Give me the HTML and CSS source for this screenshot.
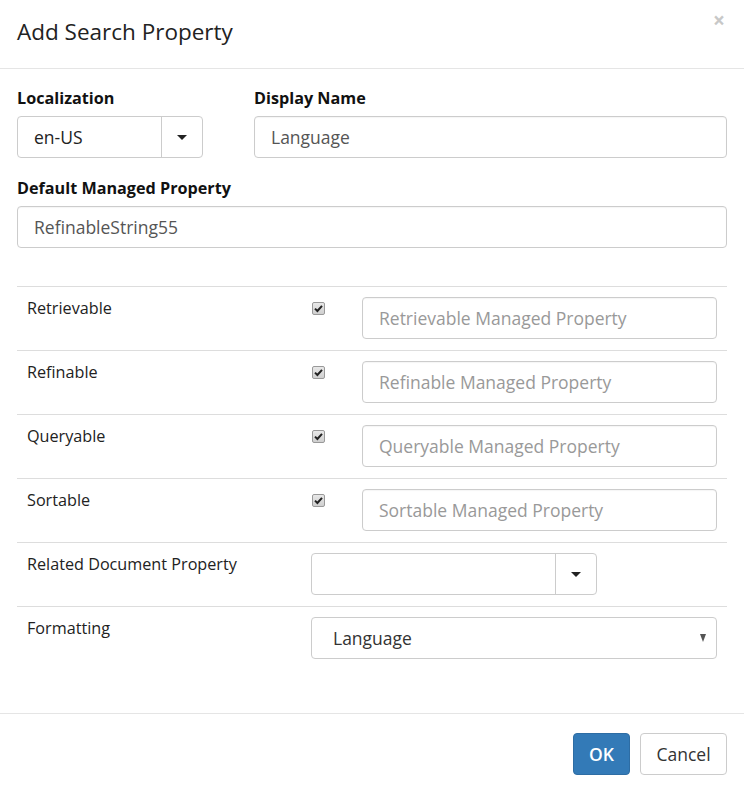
FILE: index.html
```html
<!DOCTYPE html>
<html>
<head>
<meta charset="utf-8">
<link rel="stylesheet" href="styles.css">
</head>
<body>
<div class="modal">
  <div class="modal-header">
    <h4 class="modal-title">Add Search Property</h4>
    <span class="close">×</span>
  </div>
  <div class="modal-body">
    <div class="top-row">
      <div class="field">
        <label class="lbl">Localization</label>
        <div class="combo combo-loc">
          <span class="combo-text">en-US</span>
          <span class="combo-btn"><span class="caret"></span></span>
        </div>
      </div>
      <div class="field">
        <label class="lbl">Display Name</label>
        <div class="input">Language</div>
      </div>
    </div>
    <div class="field">
      <label class="lbl">Default Managed Property</label>
      <div class="input">RefinableString55</div>
    </div>

    <div class="props">
      <div class="prow">
        <div class="pcell plabel">Retrievable</div>
        <div class="pcell pcheck"><span class="cb"><svg viewBox="0 0 13 13" width="13" height="13"><path d="M3 6.6 L5.4 9 L10 3.8" fill="none" stroke="#222" stroke-width="2"/></svg></span></div>
        <div class="pcell pinput"><div class="input ph">Retrievable Managed Property</div></div>
      </div>
      <div class="prow">
        <div class="pcell plabel">Refinable</div>
        <div class="pcell pcheck"><span class="cb"><svg viewBox="0 0 13 13" width="13" height="13"><path d="M3 6.6 L5.4 9 L10 3.8" fill="none" stroke="#222" stroke-width="2"/></svg></span></div>
        <div class="pcell pinput"><div class="input ph">Refinable Managed Property</div></div>
      </div>
      <div class="prow">
        <div class="pcell plabel">Queryable</div>
        <div class="pcell pcheck"><span class="cb"><svg viewBox="0 0 13 13" width="13" height="13"><path d="M3 6.6 L5.4 9 L10 3.8" fill="none" stroke="#222" stroke-width="2"/></svg></span></div>
        <div class="pcell pinput"><div class="input ph">Queryable Managed Property</div></div>
      </div>
      <div class="prow">
        <div class="pcell plabel">Sortable</div>
        <div class="pcell pcheck"><span class="cb"><svg viewBox="0 0 13 13" width="13" height="13"><path d="M3 6.6 L5.4 9 L10 3.8" fill="none" stroke="#222" stroke-width="2"/></svg></span></div>
        <div class="pcell pinput"><div class="input ph">Sortable Managed Property</div></div>
      </div>
      <div class="prow">
        <div class="pcell plabel">Related Document Property</div>
        <div class="pcell pwide">
          <div class="combo combo-rel">
            <span class="combo-text"></span>
            <span class="combo-btn"><span class="caret"></span></span>
          </div>
        </div>
      </div>
      <div class="prow">
        <div class="pcell plabel">Formatting</div>
        <div class="pcell pwide">
          <div class="select">
            <span>Language</span>
            <span class="sel-arrow"></span>
          </div>
        </div>
      </div>
    </div>
  </div>
  <div class="modal-footer">
    <button class="btn btn-primary">OK</button>
    <button class="btn btn-default">Cancel</button>
  </div>
</div>
</body>
</html>
```
FILE: styles.css
```css
* { box-sizing: border-box; }
html, body { margin: 0; padding: 0; background: #fff; }
body {
  font-family: "Open Sans", "Liberation Sans", sans-serif;
  color: #333;
  width: 744px;
  height: 793px;
  overflow: hidden;
}
.modal { width: 744px; }

.modal-header {
  height: 69px;
  border-bottom: 1px solid #e5e5e5;
  display: flex;
  justify-content: space-between;
  align-items: flex-start;
  padding: 0 17px;
}
.modal-title {
  margin: 0;
  font-size: 22.5px;
  font-weight: 400;
  line-height: 32px;
  padding-top: 16px;
  color: #222;
}
.close {
  font-size: 21px;
  line-height: 20px;
  font-weight: 700;
  color: #c8c8c8;
  margin-top: 10px;
  margin-right: 2px;
}

.modal-body { padding: 17px 17px 0; }
.top-row {
  display: grid;
  grid-template-columns: 237px 1fr;
}
.field { margin-bottom: 18px; }
.lbl {
  display: block;
  font-weight: 700;
  font-size: 16.2px;
  line-height: 22px;
  color: #111;
  padding-top: 1px;
  margin-bottom: 7px;
}
.input {
  height: 42px;
  border: 1px solid #ccc;
  border-radius: 4px;
  padding: 0 16px;
  font-size: 17.5px;
  line-height: 40px;
  color: #555;
  box-shadow: inset 0 1px 1px rgba(0,0,0,.04);
  white-space: nowrap;
  overflow: hidden;
}
.input.ph { color: #999; }

.combo {
  height: 42px;
  border: 1px solid #ccc;
  border-radius: 4px;
  display: flex;
  font-size: 17.5px;
  color: #222;
}
.combo-loc { width: 186px; }
.combo-rel { width: 286px; }
.combo-text {
  flex: 1;
  padding: 0 16px;
  line-height: 40px;
}
.combo-btn {
  width: 41px;
  border-left: 1px solid #ccc;
  display: flex;
  align-items: center;
  justify-content: center;
}
.caret {
  width: 0; height: 0;
  border-left: 5px solid transparent;
  border-right: 5px solid transparent;
  border-top: 5px solid #222;
}

.props {
  margin-top: 38px;
  border-top: 1px solid #ddd;
}
.prow {
  display: grid;
  grid-template-columns: 284px 51px 1fr;
  height: 64px;
  border-bottom: 1px solid #ddd;
}
.prow:last-child { border-bottom: none; }
.pcell { padding: 10px; }
.plabel {
  font-size: 16.2px;
  line-height: 22px;
  color: #222;
}
.pcheck { padding: 15px 10px 0 11px; }
.cb {
  display: block;
  width: 13px; height: 13px;
  border: 1px solid #999;
  border-radius: 2px;
  background: linear-gradient(#e8e8e8, #cfcfcf);
  position: relative;
}
.cb svg { position: absolute; left: -1px; top: -1px; }
.pinput { padding: 10px 10px 10px 10px; }
.pwide { grid-column: 2 / 4; padding: 10px 10px 10px 10px; }

.select {
  height: 42px;
  border: 1px solid #ccc;
  border-radius: 4px;
  padding: 0 10px 0 21px;
  font-size: 17.5px;
  line-height: 40px;
  color: #333;
  display: flex;
  justify-content: space-between;
  align-items: center;
}
.sel-arrow {
  width: 0; height: 0;
  border-left: 3.5px solid transparent;
  border-right: 3.5px solid transparent;
  border-top: 8px solid #555;
}

.modal-footer {
  margin-top: 42px;
  border-top: 1px solid #e5e5e5;
  padding: 19px 17px 18px;
  display: flex;
  justify-content: flex-end;
  gap: 10px;
}
.btn {
  font-family: "Open Sans", "Liberation Sans", sans-serif;
  height: 42px;
  border-radius: 4px;
  font-size: 17.5px;
  padding: 0 15px;
  border: 1px solid #ccc;
  background: #fff;
  color: #333;
}
.btn-primary {
  background: #337ab7;
  border-color: #2e6da4;
  color: #fff;
  font-weight: 600;
  width: 57px;
  padding: 0;
}
.btn-default { width: 87px; padding: 0; }
```
